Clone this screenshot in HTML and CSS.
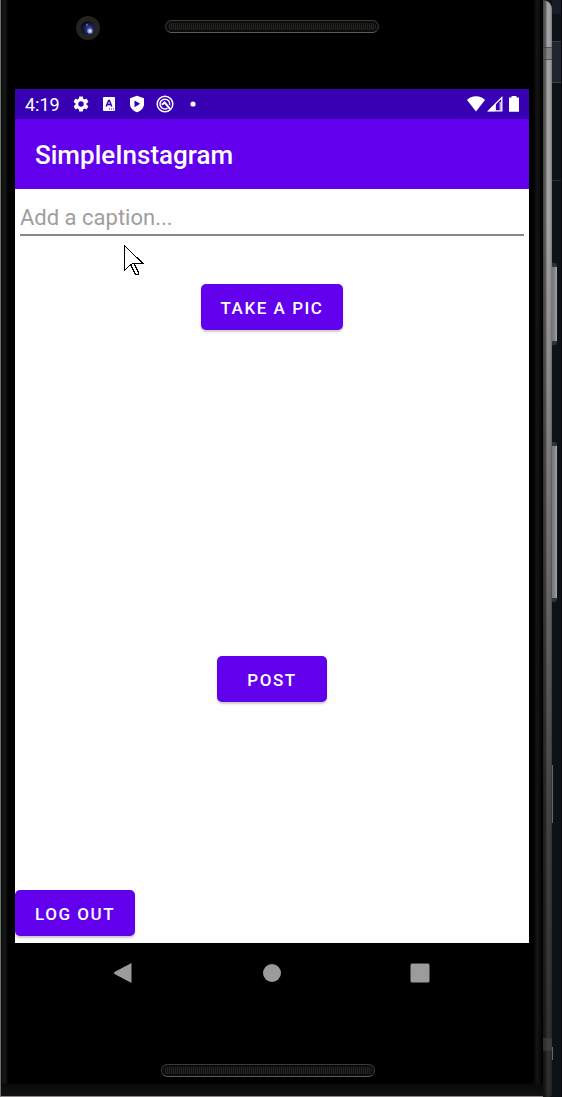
FILE: index.html
```html
<!DOCTYPE html>
<html lang="en">
<head>
<meta charset="utf-8">
<meta name="viewport" content="width=device-width, initial-scale=1">
<title>SimpleInstagram</title>
<link rel="stylesheet" href="styles.css">
</head>
<body>
<div class="desktop">
  <div class="phone">
    <div class="bezel-top">
      <svg class="camera" width="26" height="26" viewBox="0 0 26 26" aria-hidden="true">
        <defs>
          <radialGradient id="lens" cx="60%" cy="60%" r="60%">
            <stop offset="0" stop-color="#5268b8"/>
            <stop offset="0.5" stop-color="#1d2456"/>
            <stop offset="1" stop-color="#080a18"/>
          </radialGradient>
        </defs>
        <circle cx="13" cy="13" r="12" fill="#25231f"/>
        <circle cx="13" cy="13" r="7" fill="url(#lens)"/>
        <circle cx="15" cy="16" r="2.6" fill="#8fa4ec"/>
        <circle cx="15" cy="16" r="1.2" fill="#d5ddff"/>
        <circle cx="12" cy="10" r="1.2" fill="#4560c0"/>
      </svg>
      <div class="speaker"></div>
    </div>

    <div class="screen">
      <div class="status-bar">
        <span class="clock">4:19</span>
        <div class="notifications">
          <svg width="18" height="18" viewBox="0 0 24 24" fill="#fff" aria-hidden="true"><path d="M19.500 12c0-.3 0-.6-.1-.9l2.100-1.600c.2-.2.3-.5.2-.7l-2-3.500c-.1-.2-.4-.3-.7-.2l-2.400 1c-.5-.4-1.100-.7-1.700-1l-.4-2.600c0-.3-.3-.5-.5-.5h-4c-.3 0-.5.2-.5.5l-.4 2.600c-.6.3-1.200.6-1.700 1l-2.400-1c-.3-.1-.6 0-.7.2l-2 3.500c-.1.2-.1.5.2.7l2.100 1.600a8 8 0 0 0 0 1.800l-2.100 1.600c-.2.2-.3.5-.2.7l2 3.500c.1.2.4.3.7.2l2.400-1c.5.4 1.100.7 1.700 1l.4 2.600c0 .3.2.5.5.5h4c.2 0 .5-.2.5-.5l.4-2.600c.6-.3 1.200-.6 1.700-1l2.400 1c.3.1.6 0 .7-.2l2-3.500c.1-.2 0-.5-.2-.7l-2.100-1.600.1-.9zM12 15.600a3.600 3.600 0 1 1 0-7.200 3.600 3.600 0 0 1 0 7.200z"/></svg>
          <svg width="18" height="18" viewBox="0 0 18 18" aria-hidden="true"><rect x="3" y="2" width="12" height="14" rx="1" fill="#fff"/><path d="M6.200 11.500 8.600 5.500h.8L11.800 11.500M7 9.600h4" fill="none" stroke="#3700b3" stroke-width="1.500"/><path d="M9 14h5" stroke="#3700b3" stroke-width="1" stroke-dasharray="1 1"/></svg>
          <svg width="18" height="18" viewBox="0 0 18 18" aria-hidden="true"><path d="M9 .7 16 3.200v6c0 3.600-3 6.500-7 8.100-4-1.600-7-4.500-7-8.100v-6z" fill="#fff"/><path d="M6.500 5.400v6.800l5.700-3.400z" fill="#3700b3"/></svg>
          <svg width="18" height="18" viewBox="0 0 18 18" fill="none" stroke="#fff" aria-hidden="true"><circle cx="9" cy="9" r="7.800" stroke-width="1.500"/><path d="M11.500 13.200A4.900 4.900 0 1 1 13.700 10" stroke-width="1.500"/><path d="M5.800 9.800 8.600 7.500l5.400 6.300" stroke-width="2"/></svg>
          <svg width="18" height="18" viewBox="0 0 18 18" aria-hidden="true"><circle cx="9" cy="9" r="2.600" fill="#fff"/></svg>
        </div>
        <div class="signals">
          <svg width="18" height="18" viewBox="0 0 18 18" aria-hidden="true"><path d="M0 5C2 2.700 5.300 1.200 9 1.200S16 2.700 18 5L9 16.500z" fill="#fff"/></svg>
          <svg width="16" height="18" viewBox="0 0 16 18" aria-hidden="true"><path d="M1.500 15.900 14.800 2.500v13.400z" fill="none" stroke="#fff" stroke-width="1.300"/><path d="M1 16.300 8 9v7.300z" fill="#fff"/><path d="M8.400 8.500v7.300M13.200 7v8" stroke="#fff" stroke-width="1"/></svg>
          <svg width="18" height="18" viewBox="0 0 18 18" aria-hidden="true"><path d="M6.500 1h5v1.500H14v14.300H4V2.500h2.500z" fill="#fff"/></svg>
        </div>
      </div>

      <header class="app-bar"><h1 class="app-title">SimpleInstagram</h1></header>

      <main class="compose">
        <div class="field">
          <input class="caption" type="text" aria-label="Caption" placeholder="Add a caption...">
        </div>
        <button class="button" type="button">TAKE A PIC</button>
        <div class="preview"></div>
        <button class="button" type="button">POST</button>
        <div class="spacer"></div>
        <button class="button button-start" type="button">LOG OUT</button>
        <svg class="pointer" width="22" height="32" viewBox="0 0 22 32" aria-hidden="true"><path d="M1.500 1.500v25l6-6 5 10h3v-2l-4.500-9h9z" fill="#fff" stroke="#000" shape-rendering="crispEdges"/><path d="M7.500 20.500 11 19.500" stroke="#000" shape-rendering="crispEdges"/></svg>
      </main>
    </div>

    <nav class="nav-bar" aria-label="System navigation">
      <button class="nav-button" type="button" aria-label="Back"><svg width="20" height="20" viewBox="0 0 20 20"><path d="M17.500 0v20L.5 11q-1-1 0-2z" fill="#9b9b9b"/></svg></button>
      <button class="nav-button" type="button" aria-label="Home"><svg width="20" height="20" viewBox="0 0 20 20"><circle cx="10" cy="10" r="9" fill="#9b9b9b"/></svg></button>
      <button class="nav-button" type="button" aria-label="Overview"><svg width="20" height="20" viewBox="0 0 20 20"><rect x=".5" y=".5" width="19" height="19" rx="1.500" fill="#9b9b9b"/></svg></button>
    </nav>

    <div class="bezel-bottom"><div class="speaker"></div></div>
  </div>
  <div class="rail"><div class="antenna"></div><div class="antenna"></div></div>
  <div class="backdrop">
    <div class="backdrop-top"></div>
    <div class="backdrop-tab"></div>
    <div class="backdrop-row"></div>
    <div class="side-key power"></div>
    <div class="side-key volume"></div>
    <div class="side-notch notch-upper"></div>
    <div class="side-notch notch-lower"></div>
  </div>
</div>
</body>
</html>
```

FILE: styles.css
```css
* {
  box-sizing: border-box;
}

body {
  margin: 0;
  background: #0d1118;
  font-family: Roboto, "Liberation Sans", sans-serif;
}

.desktop {
  display: flex;
  min-height: 100vh;
}

.phone {
  flex: 1;
  min-width: 0;
  display: flex;
  flex-direction: column;
  padding: 0 14px 0 14px;
  border-left: 1px solid #6c7070;
  border-bottom: 1px solid #8e8888;
  background:
    linear-gradient(to top, #121212, #090909 12px, transparent 13px),
    linear-gradient(to right, #0b0d0c, #161918 4px, #000 7px, #000 calc(100% - 10px), #151515 calc(100% - 6px), #0b0b0b calc(100% - 3px), #000);
}

.bezel-top {
  position: relative;
  display: flex;
  justify-content: center;
  height: 89px;
  padding-top: 20px;
}

.camera {
  position: absolute;
  left: 60px;
  top: 15px;
}

.speaker {
  width: 214px;
  height: 13px;
  border: 1px solid #3a3a3a;
  border-bottom-color: #5a5a5a;
  border-radius: 7px;
  background: repeating-linear-gradient(to right, #12110f 0 1px, #25231e 1px 2px);
  box-shadow: inset 0 0 0 2px #0c0c0c;
}

.screen {
  flex: 1;
  display: flex;
  flex-direction: column;
  background: #fefefe;
}

.status-bar {
  display: flex;
  align-items: center;
  height: 30px;
  padding: 0 6px 0 10px;
  background: #3700b3;
  color: #fff;
}

.clock {
  padding-top: 2px;
  font-size: 18px;
  line-height: 28px;
}

.notifications {
  display: flex;
  gap: 10px;
  margin-left: 12px;
}

.signals {
  display: flex;
  gap: 2px;
  margin-left: auto;
}

.app-bar {
  display: flex;
  align-items: center;
  height: 70px;
  padding: 2px 20px 0;
  background: #6200ee;
}

.app-title {
  margin: 0;
  color: #fff;
  font-size: 26px;
  font-weight: 500;
  line-height: 32px;
}

.compose {
  position: relative;
  flex: 1;
  display: flex;
  flex-direction: column;
  align-items: center;
  padding-bottom: 7px;
}

.field {
  width: 100%;
  padding: 10px 5px 0;
  margin-bottom: 48px;
}

.caption {
  display: block;
  width: 100%;
  height: 37px;
  padding: 2px 0 0;
  border: 0;
  border-bottom: 2px solid #868686;
  background: transparent;
  color: #222;
  font: 22px/32px Roboto, "Liberation Sans", sans-serif;
  outline: 0;
}

.caption::placeholder {
  color: #9e9e9e;
  opacity: 1;
}

.button {
  min-width: 110px;
  height: 46px;
  padding: 2px 20px 0;
  border: 0;
  border-radius: 5px;
  background: #6200ee;
  box-shadow: 0 2px 2px #0003;
  color: #fff;
  font: 500 17px/24px Roboto, "Liberation Sans", sans-serif;
  letter-spacing: 0.09em;
}

.button-start {
  align-self: flex-start;
}

.preview {
  flex: 326;
}

.spacer {
  flex: 188;
}

.pointer {
  position: absolute;
  left: 108px;
  top: 55px;
}

.nav-bar {
  display: flex;
  justify-content: space-between;
  height: 60px;
  padding: 0 84px;
}

.nav-button {
  display: grid;
  place-items: center;
  width: 50px;
  padding: 0;
  border: 0;
  background: transparent;
}

.bezel-bottom {
  display: flex;
  justify-content: center;
  height: 93px;
  padding: 61px 8px 0 0;
}

.rail {
  display: flex;
  flex-direction: column;
  justify-content: space-between;
  width: 9px;
  padding: 47px 0 46px;
  border-radius: 0 14px 6px 0;
  background:
    linear-gradient(to bottom, transparent 20%, #0009 75%, #000b),
    linear-gradient(to right, #444, #666 3px, #a2a2a2 4px, #a2a2a2 7px, #777);
}

.antenna {
  height: 13px;
  border: solid #3338;
  border-width: 1px 0;
  background: #5556;
}

.backdrop {
  position: relative;
  width: 10px;
  border-right: 1px solid #05070b;
}

.backdrop-top {
  height: 14px;
  background: #171c26;
}

.backdrop-tab {
  height: 42px;
  margin-top: 27px;
  border: solid #3a3f49;
  border-width: 1px 0;
  background: #20252f;
}

.backdrop-row {
  height: 98px;
  border-bottom: 1px solid #292e38;
}

.side-key,
.side-notch {
  position: absolute;
  left: 0;
}

.side-key {
  width: 5px;
  border: solid #333;
  border-width: 4px 0;
  border-radius: 0 3px 3px 0;
  background: linear-gradient(to right, #777, #888 3px, #aaa);
}

.power {
  top: 263px;
  height: 82px;
}

.volume {
  top: 442px;
  height: 160px;
}

.side-notch {
  width: 1px;
  background: #666;
}

.notch-upper {
  top: 765px;
  height: 58px;
}

.notch-lower {
  top: 1047px;
  height: 13px;
}
```
